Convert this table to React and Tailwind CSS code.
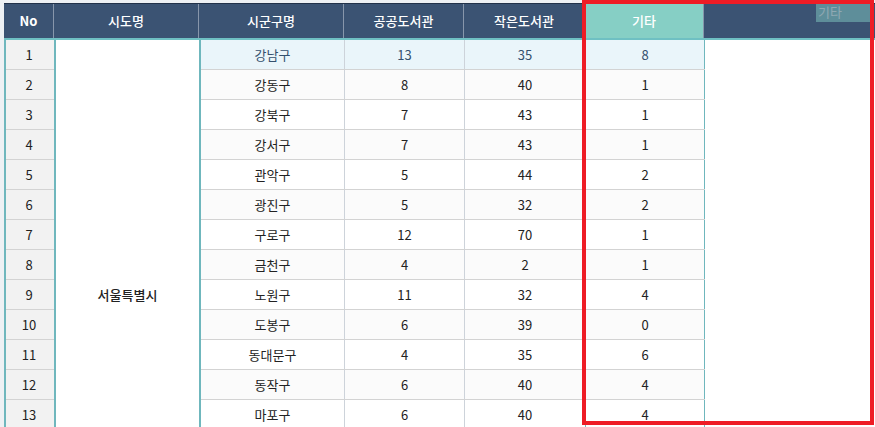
const rows = [
  ["강남구", 13, 35, 8],
  ["강동구", 8, 40, 1],
  ["강북구", 7, 43, 1],
  ["강서구", 7, 43, 1],
  ["관악구", 5, 44, 2],
  ["광진구", 5, 32, 2],
  ["구로구", 12, 70, 1],
  ["금천구", 4, 2, 1],
  ["노원구", 11, 32, 4],
  ["도봉구", 6, 39, 0],
  ["동대문구", 4, 35, 6],
  ["동작구", 6, 40, 4],
  ["마포구", 6, 40, 4],
];

const font = { fontFamily: '"Noto Sans CJK KR", "Noto Sans", sans-serif' };

export default function App() {
  return (
    <div className="relative h-[427px] w-[875px] overflow-hidden bg-white pl-1 pt-[3px]" style={font}>
      <div className="absolute left-0 top-0 h-full w-1 bg-[#eef1f4]" />
      <div className="absolute left-0 top-0 h-[3px] w-full bg-[#eef1f4]" />

      {/* header */}
      <div className="flex h-[35px] border-t border-[#22324a] bg-[#3b5373] text-[13px] font-medium text-white">
        <div className="flex w-[50px] items-center justify-center border-r border-[#8796ab] font-bold">No</div>
        <div className="flex w-[145px] items-center justify-center border-r border-[#8796ab]">시도명</div>
        <div className="flex w-[145px] items-center justify-center border-r border-[#8796ab]">시군구명</div>
        <div className="flex w-[120px] items-center justify-center border-r border-[#8796ab]">공공도서관</div>
        <div className="flex w-[120px] items-center justify-center">작은도서관</div>
        <div className="flex w-[120px] items-center justify-center border-x border-[#8796ab] bg-[#86cfc5]">기타</div>
        <div className="flex flex-1 items-start justify-end pr-[5px]">
          <div className="h-[18px] w-[54px] bg-[#5e8e9a] pl-[2px] text-[13px] font-normal leading-[16px] text-[#8fa9b3]">기타</div>
        </div>
      </div>
      <div className="h-[2px] bg-[#6fc0c3]" />

      {/* body */}
      <div className="flex h-[400px] text-[13px] text-[#222]">
        <div className="w-[50px] border-l-2 border-[#6fb7bd] bg-[#f2f2f2]">
          {rows.map((r, i) => (
            <div key={i} className="flex h-[30px] items-center justify-center border-b border-[#d3d3d3] pr-[2px]">
              {i + 1}
            </div>
          ))}
        </div>
        <div className="flex h-[510px] w-[147px] flex-none items-center justify-center border-x-2 border-[#6fb7bd] bg-white font-medium">
          서울특별시
        </div>
        <div className="flex-none">
          {rows.map((r, i) => (
            <div
              key={i}
              className={
                "flex h-[30px] border-b border-[#d3d3d3] " +
                (i === 0 ? "bg-[#eaf5fa] text-[#34506e]" : i % 2 === 1 ? "bg-[#fbfbfb]" : "bg-white")
              }
            >
              <div className="flex w-[144px] items-center justify-center border-r border-[#cdd3da]">{r[0]}</div>
              <div className="flex w-[120px] items-center justify-center border-r border-[#cdd3da]">{r[1]}</div>
              <div className="flex w-[120px] items-center justify-center">{r[2]}</div>
              <div className="flex w-[120px] items-center justify-center border-x border-[#6fb7bd]">{r[3]}</div>
            </div>
          ))}
        </div>
        <div className="flex-1 bg-white" />
      </div>

      {/* highlight box */}
      <div className="pointer-events-none absolute left-[582px] top-0 h-[425px] w-[292px] border-4 border-[#ee1c25]" />
    </div>
  );
}
